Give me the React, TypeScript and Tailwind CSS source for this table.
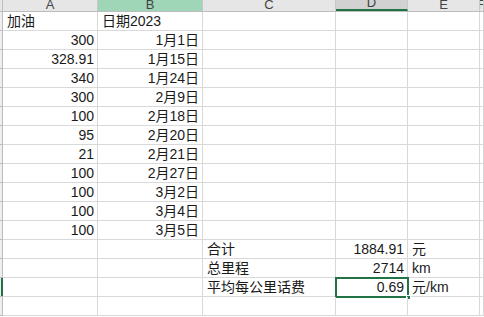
const COLS = "grid grid-cols-[3px_95px_105px_133px_72px_72px_1fr]";

const DATA: [string, string][] = [
  ["300", "1月1日"],
  ["328.91", "1月15日"],
  ["340", "1月24日"],
  ["300", "2月9日"],
  ["100", "2月18日"],
  ["95", "2月20日"],
  ["21", "2月21日"],
  ["100", "2月27日"],
  ["100", "3月2日"],
  ["100", "3月4日"],
  ["100", "3月5日"],
];

type Row = { a?: string; b?: string; bLeft?: boolean; aLeft?: boolean; c?: string; d?: string; e?: string; sel?: boolean };

const ROWS: Row[] = [
  { a: "加油", aLeft: true, b: "日期2023", bLeft: true },
  ...DATA.map(([a, b]) => ({ a, b })),
  { c: "合计", d: "1884.91", e: "元" },
  { c: "总里程", d: "2714", e: "km" },
  { c: "平均每公里话费", d: "0.69", e: "元/km", sel: true },
  {},
];

function Cell({ text, left, className = "" }: { text?: string; left?: boolean; className?: string }) {
  return (
    <div
      className={`relative flex items-center h-[19px] border-r border-b border-[#d9d9d9] overflow-visible whitespace-nowrap pt-[1px] ${
        left ? "justify-start pl-[4px]" : "justify-end pr-[3px]"
      } ${className}`}
    >
      {text}
    </div>
  );
}

function Header({ label, className = "" }: { label: string; className?: string }) {
  return (
    <div className={`relative flex justify-center items-end h-[11px] overflow-hidden border-r border-[#c8c8c8] ${className}`}>
      <span className="text-[13px] leading-none mb-[0px] text-[#444]">{label}</span>
    </div>
  );
}

export default function App() {
  return (
    <div
      className="w-[484px] h-[317px] overflow-hidden bg-white text-[14px] text-[#1a1a1a]"
      style={{ fontFamily: '"Liberation Sans", "Noto Sans CJK SC", sans-serif' }}
    >
      <div className={`${COLS} border-b border-[#bdbdbd] bg-[#e6e6e6]`}>
        <div className="h-[11px] border-r border-[#bdbdbd] bg-[#e6e6e6]" />
        <Header label="A" />
        <Header label="B" className="bg-[#a0d6b8]" />
        <Header label="C" />
        <Header label="D" className="bg-[#d2d2d2] border-b-2 border-b-[#217346]" />
        <Header label="E" />
        <Header label="F" />
      </div>
      {ROWS.map((r, i) => (
        <div key={i} className={COLS}>
          <div className="relative h-[19px] border-r border-b border-[#bdbdbd] bg-[#eeeeee]">
            {r.sel && <div className="absolute right-[-1px] top-0 bottom-0 w-[2px] bg-[#217346]" />}
          </div>
          <Cell text={r.a} left={r.aLeft} />
          <Cell text={r.b} left={r.bLeft} />
          <Cell text={r.c} left />
          <Cell text={r.d}>
          </Cell>
          <Cell text={r.e} left />
          <Cell />
        </div>
      )).map((row, i) =>
        ROWS[i].sel ? (
          <div key={`s${i}`} className="relative">
            {row}
            <div className="absolute left-[335px] top-[-1px] w-[74px] h-[21px] border-2 border-[#217346] pointer-events-none" />
            <div className="absolute left-[406px] top-[17px] w-[5px] h-[5px] bg-[#217346] border border-white" />
          </div>
        ) : (
          row
        )
      )}
    </div>
  );
}
